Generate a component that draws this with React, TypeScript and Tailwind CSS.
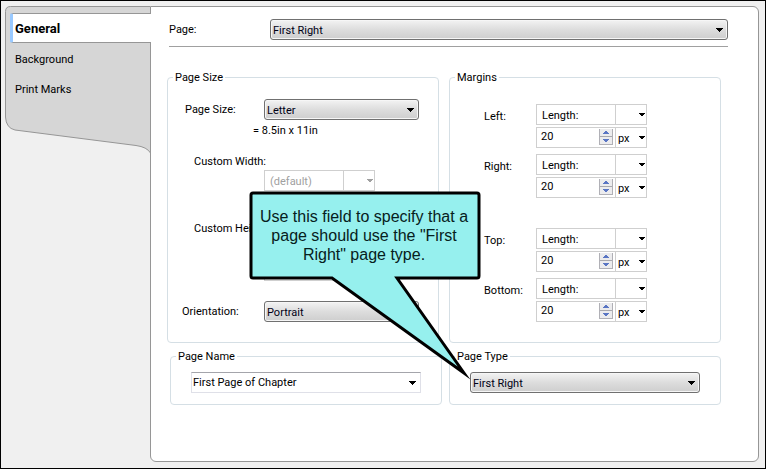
import type { ReactNode } from "react";

function Arrow() {
  return (
    <svg
      width="7"
      height="4"
      viewBox="0 0 7 4"
      shapeRendering="crispEdges"
      aria-hidden="true"
      className="pointer-events-none absolute top-1/2 right-[5px] -mt-0.5 fill-current"
    >
      <path d="M0 0H7V1H6V2H5V3H4V4H3V3H2V2H1V1H0Z" />
    </svg>
  );
}

function SmallArrow() {
  return (
    <svg
      width="6"
      height="3"
      viewBox="0 0 6 3"
      shapeRendering="crispEdges"
      aria-hidden="true"
      className="pointer-events-none absolute top-1/2 right-px -mt-0.5 fill-current"
    >
      <path d="M0 0H6V1H5V2H4V3H2V2H1V1H0Z" />
    </svg>
  );
}

function DropButton({ id, value, label, className = "" }: { id: string; value: string; label?: string; className?: string }) {
  return (
    <div className={`relative h-[21px] ${className}`}>
      <select
        id={id}
        aria-label={label}
        className="block h-full w-full appearance-none rounded-[3px] border border-[#707070] bg-linear-to-b from-[#f3f3f3] from-0% via-[#dddddd] via-50% to-[#cecece] pt-0.5 pr-5 pl-0.5 text-[#000014] shadow-[inset_0_0_0_1px_#f6f6f6]"
      >
        <option>{value}</option>
      </select>
      <Arrow />
    </div>
  );
}

function FlatSelect({ id, value, label, disabled = false }: { id: string; value: string; label?: string; disabled?: boolean }) {
  return (
    <div className={`relative flex h-[21px] w-[111px] border border-[#cfcfcf] bg-white ${disabled ? "text-[#a0a0a0]" : "text-black"}`}>
      <select id={id} aria-label={label} disabled={disabled} className="block h-full w-full appearance-none pt-0.5 pl-[5px] opacity-100">
        <option>{value}</option>
      </select>
      <span className="pointer-events-none absolute inset-y-0 right-[30px] w-px bg-[#cfcfcf]" />
      <SmallArrow />
    </div>
  );
}

function SpinButton({ down = false, label }: { down?: boolean; label: string }) {
  return (
    <button type="button" aria-label={label} className="flex h-[7px] w-full items-center justify-center bg-[#ececee]">
      <svg width="6" height="3" viewBox="0 0 6 3" shapeRendering="crispEdges" aria-hidden="true" className="fill-[#5a76c4]">
        <path d={down ? "M0 0H6V1H5V2H4V3H2V2H1V1H0Z" : "M2 0H4V1H5V2H6V3H0V2H1V1H2Z"} />
      </svg>
    </button>
  );
}

function NumberField({ label, value }: { label: string; value: string }) {
  return (
    <div className="flex h-[21px] w-[111px] border border-[#cfcfcf] bg-white">
      <input type="text" aria-label={`${label} value`} defaultValue={value} className="block h-[17px] min-w-0 flex-1 pl-1 outline-none" />
      <div className="mt-px mr-0.5 flex h-4 w-3.5 flex-col gap-px border-x border-b border-[#b0b0b6] bg-[#a8a8ae]">
        <SpinButton label={`Increase ${label}`} />
        <SpinButton label={`Decrease ${label}`} down />
      </div>
      <div className="relative w-[31px] border-l border-[#cfcfcf]">
        <select aria-label={`${label} unit`} className="block h-full w-full appearance-none pt-0.5 pl-0.5">
          <option>px</option>
        </select>
        <SmallArrow />
      </div>
    </div>
  );
}

function Margin({ name }: { name: string }) {
  const id = `margin-${name.toLowerCase()}`;
  return (
    <div className="flex items-start">
      <label htmlFor={id} className="w-[52px] pt-1">{name}:</label>
      <div className="flex flex-col gap-0.5">
        <FlatSelect id={id} value="Length:" />
        <NumberField label={name} value="20" />
      </div>
    </div>
  );
}

function CustomSize({ name }: { name: string }) {
  const id = `custom-${name.toLowerCase()}`;
  return (
    <div>
      <label htmlFor={id} className="block pl-[26px]">Custom {name}:</label>
      <div className="ml-24 flex flex-col gap-0.5">
        <FlatSelect id={id} value="(default)" disabled />
        <input type="text" disabled aria-label={`Custom ${name} value`} className="block h-[21px] w-[111px] border border-[#cfcfcf] bg-white" />
      </div>
    </div>
  );
}

function Group({ title, children, className = "" }: { title: string; children: ReactNode; className?: string }) {
  return (
    <fieldset className={`min-w-0 rounded-[4px] border border-[#d5dfe5] ${className}`}>
      <legend className="ml-[5px] px-0.5">{title}</legend>
      {children}
    </fieldset>
  );
}

function Sidebar() {
  return (
    <nav aria-label="Sections" className="relative w-[145px] shrink-0 pt-[7px] pl-[5px]">
      <svg width="145" height="148" viewBox="0 0 145 148" aria-hidden="true" className="absolute top-0 left-0">
        <path
          d="M146 .5H5.5Q.5 .5 .5 5.5V111Q1 122 10 124L131 139.500Q142 141 145.500 147"
          fill="#d6d6d6"
          stroke="#969696"
        />
      </svg>
      <div className="relative -mr-px flex flex-col">
        <button type="button" className="flex h-[30px] items-center rounded-l-[2px] border-y border-l-[3px] border-y-[#969696] border-l-[#99c9ff] bg-white pl-0.5 text-[13px] font-bold">
          General
        </button>
        <button type="button" className="flex h-[30px] items-center pt-0.5 pl-[5px]">Background</button>
        <button type="button" className="flex h-[30px] items-center pt-0.5 pl-[5px]">Print Marks</button>
      </div>
    </nav>
  );
}

function Callout() {
  return (
    <div role="note" className="absolute -top-[157px] -left-[200px] w-[232px]">
      <svg width="232" height="192" viewBox="0 0 232 192" aria-hidden="true" className="absolute top-0 left-0">
        <path
          d="M4 2H228Q230 2 230 4V85Q230 87 228 87H148L215 182L83 87H4Q2 87 2 85V4Q2 2 4 2Z"
          fill="#96f0ee"
          stroke="#000"
          strokeWidth="3"
          strokeMiterlimit="10"
        />
      </svg>
      <p className="relative pt-4 pr-2.5 pl-2 text-center font-['Liberation_Sans',Arial,sans-serif] text-[16px] leading-[19px] text-[#062020]">
        Use this field to specify that a page should use the &quot;First Right&quot; page type.
      </p>
    </div>
  );
}

export default function App() {
  return (
    <div className="flex min-h-screen border border-black bg-[#f0f0f0] pt-[5px] pr-[6px] pb-[6px] pl-1 font-[Roboto,Tahoma,sans-serif] text-[11px] leading-[17px] text-black">
      <Sidebar />
      <main className="flex-1 rounded-r-[6px] rounded-bl-[6px] border border-[#969696] bg-white pr-[30px] pl-4">
        <div className="ml-0.5 flex items-center border-b border-[#a0a0a0] pt-3 pb-1.5">
          <label htmlFor="page" className="w-[101px]">Page:</label>
          <DropButton id="page" value="First Right" className="flex-1" />
        </div>
        <div className="mt-[22px] mr-[7px] grid grid-cols-2 gap-2.5">
          <Group title="Page Size" className="pb-5">
            <div className="mt-[13px] flex items-center pl-[17px]">
              <label htmlFor="page-size" className="w-[79px]">Page Size:</label>
              <DropButton id="page-size" value="Letter" className="w-[155px]" />
            </div>
            <p className="mt-0.5 pl-[85px]">= 8.5in x 11in</p>
            <div className="mt-3.5 flex flex-col gap-1.5">
              <CustomSize name="Width" />
              <CustomSize name="Height" />
            </div>
            <div className="mt-5 flex items-center pl-3.5">
              <label htmlFor="orientation" className="w-[82px]">Orientation:</label>
              <DropButton id="orientation" value="Portrait" className="w-[155px]" />
            </div>
          </Group>
          <Group title="Margins">
            <div className="mt-[18px] flex flex-col gap-1.5 pl-[34px]">
              <Margin name="Left" />
              <Margin name="Right" />
            </div>
            <div className="mt-[30px] flex flex-col gap-1.5 pl-[34px]">
              <Margin name="Top" />
              <Margin name="Bottom" />
            </div>
          </Group>
        </div>
        <div className="mt-[5px] mr-[7px] grid grid-cols-2 gap-[7px] pl-[3px]">
          <Group title="Page Name" className="pb-[11px]">
            <div className="relative mt-[7px] mr-5 ml-5 h-[21px]">
              <select aria-label="Page Name" className="block h-full w-full appearance-none border border-[#dfe0e8] border-t-[#a4a5ab] bg-white pr-5 pl-px">
                <option>First Page of Chapter</option>
              </select>
              <Arrow />
            </div>
          </Group>
          <div className="relative">
            <Group title="Page Type" className="pb-[11px]">
              <DropButton id="page-type" label="Page Type" value="First Right" className="mt-[7px] mr-5 ml-5" />
            </Group>
            <Callout />
          </div>
        </div>
      </main>
    </div>
  );
}
